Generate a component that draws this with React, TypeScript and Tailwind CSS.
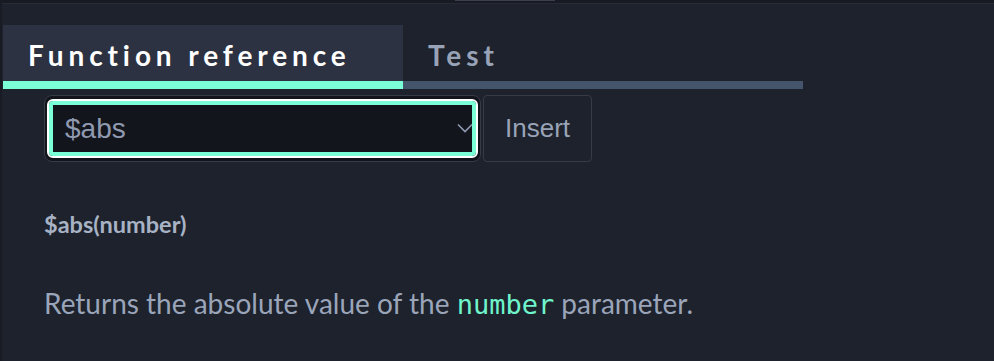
import clsx from "clsx";

const tabs = ["Function reference", "Test"];

export default function App() {
  return (
    <div className="relative h-[361px] w-full overflow-hidden border-l-2 border-[#181b23] bg-[#1d222c] font-['Lato',sans-serif]">
      {/* top strip */}
      <div className="h-[3px] bg-[#171923]" />
      <div className="h-px bg-[#262b36]" />
      <div className="absolute left-[453px] top-0 h-px w-[100px] bg-[#3a3f4b]" />

      <div className="mt-[21px] ml-px flex w-[800px]">
        {tabs.map((t, i) => (
          <div
            key={t}
            className={clsx(
              "flex w-[400px] flex-col",
              i === 0 ? "bg-[#2c3241]" : ""
            )}
          >
            <div
              className={clsx(
                "flex h-[56px] items-center px-[25px] pt-[3px] text-[28px] font-bold tracking-[0.175em]",
                i === 0 ? "text-white" : "text-[#98a3b8]"
              )}
            >
              {t}
            </div>
            <div
              className={clsx(
                "h-[8px]",
                i === 0 ? "bg-[#7affd6]" : "bg-[#44546b]"
              )}
            />
          </div>
        ))}
      </div>

      <div className="mt-[6px] ml-[42px] flex gap-[2px]">
        <div className="relative h-[67px] w-[437px] rounded-lg border border-[#363b48] bg-[#13151d] px-[2px] py-[3px]">
          <div className="h-full rounded-md border-2 border-white">
            <div className="flex h-full items-center rounded-[4px] border-4 border-[#7affd6] bg-[#13151d] pl-[12px] font-['Liberation_Sans',sans-serif] text-[28px] text-[#8f9ab0]">
              $abs
            </div>
          </div>
          <svg
            viewBox="0 0 16 10"
            className="absolute left-[412px] top-[27px] h-[10px] w-[16px] text-[#8f9ab0]"
            fill="none"
            stroke="currentColor"
            strokeWidth={1.6}
          >
            <polyline points="1,1.5 8,8.5 15,1.5" />
          </svg>
        </div>
        <button className="h-[67px] w-[109px] rounded-[4px] border border-[#363b48] bg-[#1d222c] font-['Liberation_Sans',sans-serif] text-[26px] text-[#9aa4b8]">
          Insert
        </button>
      </div>

      <div className="mt-[46px] ml-[42px] text-[23.5px] leading-[32px] font-bold text-[#a8b2c5]">
        $abs(number)
      </div>

      <p className="mt-[43px] ml-[42px] text-[28px] leading-[40px] text-[#9aa5ba]">
        Returns the absolute value of the{" "}
        <code className="font-['DejaVu_Sans_Mono',monospace] text-[27px] font-light text-[#6ff5cc]">
          number
        </code>{" "}
        parameter.
      </p>
    </div>
  );
}
